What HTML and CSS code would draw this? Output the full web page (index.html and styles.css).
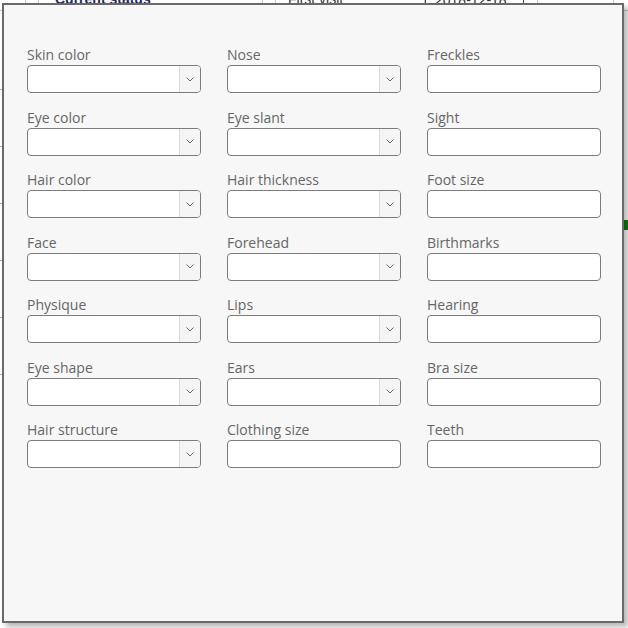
FILE: index.html
```html
<!DOCTYPE html>
<html>
<head>
<meta charset="utf-8">
<link rel="stylesheet" href="styles.css">
</head>
<body>
<div class="sheet">
  <div class="sheet-row">
    <div class="c c1"></div>
    <div class="c c2"></div>
    <div class="c c3"><span class="status">Current status</span></div>
    <div class="c c4"></div>
    <div class="c c5"><span class="plain">First visit</span></div>
    <div class="c c6"><span class="plain">2018-12-18</span></div>
    <div class="c c7"></div>
    <div class="c c8"></div>
  </div>
  <div class="side-lines">
    <div class="sl"></div><div class="sl"></div><div class="sl"></div><div class="sl"></div><div class="sl"></div><div class="sl"></div>
  </div>
  <div class="green-mark"></div>
</div>

<div class="dialog">
  <div class="grid">
    <div class="field"><label>Skin color</label><div class="select"><div class="btn"><svg width="8" height="5" viewBox="0 0 8 5"><path d="M0.5 0.5 L4 4 L7.5 0.5" fill="none" stroke="#555" stroke-width="0.9"/></svg></div></div></div>
    <div class="field"><label>Nose</label><div class="select"><div class="btn"><svg width="8" height="5" viewBox="0 0 8 5"><path d="M0.5 0.5 L4 4 L7.5 0.5" fill="none" stroke="#555" stroke-width="0.9"/></svg></div></div></div>
    <div class="field"><label>Freckles</label><div class="input"></div></div>

    <div class="field"><label>Eye color</label><div class="select"><div class="btn"><svg width="8" height="5" viewBox="0 0 8 5"><path d="M0.5 0.5 L4 4 L7.5 0.5" fill="none" stroke="#555" stroke-width="0.9"/></svg></div></div></div>
    <div class="field"><label>Eye slant</label><div class="select"><div class="btn"><svg width="8" height="5" viewBox="0 0 8 5"><path d="M0.5 0.5 L4 4 L7.5 0.5" fill="none" stroke="#555" stroke-width="0.9"/></svg></div></div></div>
    <div class="field"><label>Sight</label><div class="input"></div></div>

    <div class="field"><label>Hair color</label><div class="select"><div class="btn"><svg width="8" height="5" viewBox="0 0 8 5"><path d="M0.5 0.5 L4 4 L7.5 0.5" fill="none" stroke="#555" stroke-width="0.9"/></svg></div></div></div>
    <div class="field"><label>Hair thickness</label><div class="select"><div class="btn"><svg width="8" height="5" viewBox="0 0 8 5"><path d="M0.5 0.5 L4 4 L7.5 0.5" fill="none" stroke="#555" stroke-width="0.9"/></svg></div></div></div>
    <div class="field"><label>Foot size</label><div class="input"></div></div>

    <div class="field"><label>Face</label><div class="select"><div class="btn"><svg width="8" height="5" viewBox="0 0 8 5"><path d="M0.5 0.5 L4 4 L7.5 0.5" fill="none" stroke="#555" stroke-width="0.9"/></svg></div></div></div>
    <div class="field"><label>Forehead</label><div class="select"><div class="btn"><svg width="8" height="5" viewBox="0 0 8 5"><path d="M0.5 0.5 L4 4 L7.5 0.5" fill="none" stroke="#555" stroke-width="0.9"/></svg></div></div></div>
    <div class="field"><label>Birthmarks</label><div class="input"></div></div>

    <div class="field"><label>Physique</label><div class="select"><div class="btn"><svg width="8" height="5" viewBox="0 0 8 5"><path d="M0.5 0.5 L4 4 L7.5 0.5" fill="none" stroke="#555" stroke-width="0.9"/></svg></div></div></div>
    <div class="field"><label>Lips</label><div class="select"><div class="btn"><svg width="8" height="5" viewBox="0 0 8 5"><path d="M0.5 0.5 L4 4 L7.5 0.5" fill="none" stroke="#555" stroke-width="0.9"/></svg></div></div></div>
    <div class="field"><label>Hearing</label><div class="input"></div></div>

    <div class="field"><label>Eye shape</label><div class="select"><div class="btn"><svg width="8" height="5" viewBox="0 0 8 5"><path d="M0.5 0.5 L4 4 L7.5 0.5" fill="none" stroke="#555" stroke-width="0.9"/></svg></div></div></div>
    <div class="field"><label>Ears</label><div class="select"><div class="btn"><svg width="8" height="5" viewBox="0 0 8 5"><path d="M0.5 0.5 L4 4 L7.5 0.5" fill="none" stroke="#555" stroke-width="0.9"/></svg></div></div></div>
    <div class="field"><label>Bra size</label><div class="input"></div></div>

    <div class="field"><label>Hair structure</label><div class="select"><div class="btn"><svg width="8" height="5" viewBox="0 0 8 5"><path d="M0.5 0.5 L4 4 L7.5 0.5" fill="none" stroke="#555" stroke-width="0.9"/></svg></div></div></div>
    <div class="field"><label>Clothing size</label><div class="input"></div></div>
    <div class="field"><label>Teeth</label><div class="input"></div></div>
  </div>
</div>
</body>
</html>
```

FILE: styles.css
```css
html, body {
  margin: 0;
  padding: 0;
  background: #ffffff;
  width: 628px;
  height: 628px;
  overflow: hidden;
  font-family: "Open Sans", "Noto Sans", sans-serif;
}

.sheet {
  position: relative;
  width: 628px;
  height: 628px;
}

.sheet-row {
  display: flex;
  height: 22px;
  margin-top: -12px;
  border-bottom: 1px solid #c8c8c8;
}

.c {
  border-right: 1px solid #c8c8c8;
  height: 22px;
  overflow: hidden;
  line-height: 22px;
  font-size: 14px;
  box-sizing: border-box;
  white-space: nowrap;
}
.c1 { width: 26px; }
.c2 { width: 13px; }
.c3 { width: 224px; padding-left: 16px; }
.c4 { width: 13px; }
.c5 { width: 149px; padding-left: 12px; }
.c6 { width: 99px; padding-left: 9px; border: 1px solid #444; }
.c7 { width: 14px; }
.c8 { width: 76px; }

.status {
  color: #1f2a5c;
  font-weight: bold;
  font-family: "Liberation Sans", sans-serif;
}
.plain {
  color: #333;
  font-family: "Liberation Sans", sans-serif;
}

.side-lines {
  display: flex;
  flex-direction: column;
  gap: 56px;
  padding-top: 78px;
}
.sl {
  width: 4px;
  height: 1px;
  background: #aaa;
}

.green-mark {
  position: absolute;
  right: 0;
  top: 232px;
  width: 4px;
  height: 10px;
  background: #127a12;
}

.dialog {
  position: absolute;
  left: 2px;
  top: 3px;
  width: 622px;
  height: 620px;
  box-sizing: border-box;
  border: 2px solid #6a6a6a;
  background: #f7f7f7;
  box-shadow: 4px 4px 5px rgba(0, 0, 0, 0.28);
  padding: 40px 0 0 23px;
}

.grid {
  display: grid;
  grid-template-columns: 174px 174px 174px;
  column-gap: 26px;
  row-gap: 14.5px;
}

.field {
  display: flex;
  flex-direction: column;
}

.field label {
  font-size: 14px;
  line-height: 20px;
  color: #666666;
  white-space: nowrap;
}

.select, .input {
  height: 28px;
  box-sizing: border-box;
  border: 1px solid #7c7c7c;
  border-radius: 4px;
  background: #ffffff;
}

.select {
  display: flex;
  justify-content: flex-end;
  overflow: hidden;
}

.btn {
  width: 21px;
  height: 100%;
  box-sizing: border-box;
  border-left: 1px solid #dadada;
  background: #f5f5f5;
  display: flex;
  align-items: center;
  justify-content: center;
}
.btn svg { display: block; }
```
